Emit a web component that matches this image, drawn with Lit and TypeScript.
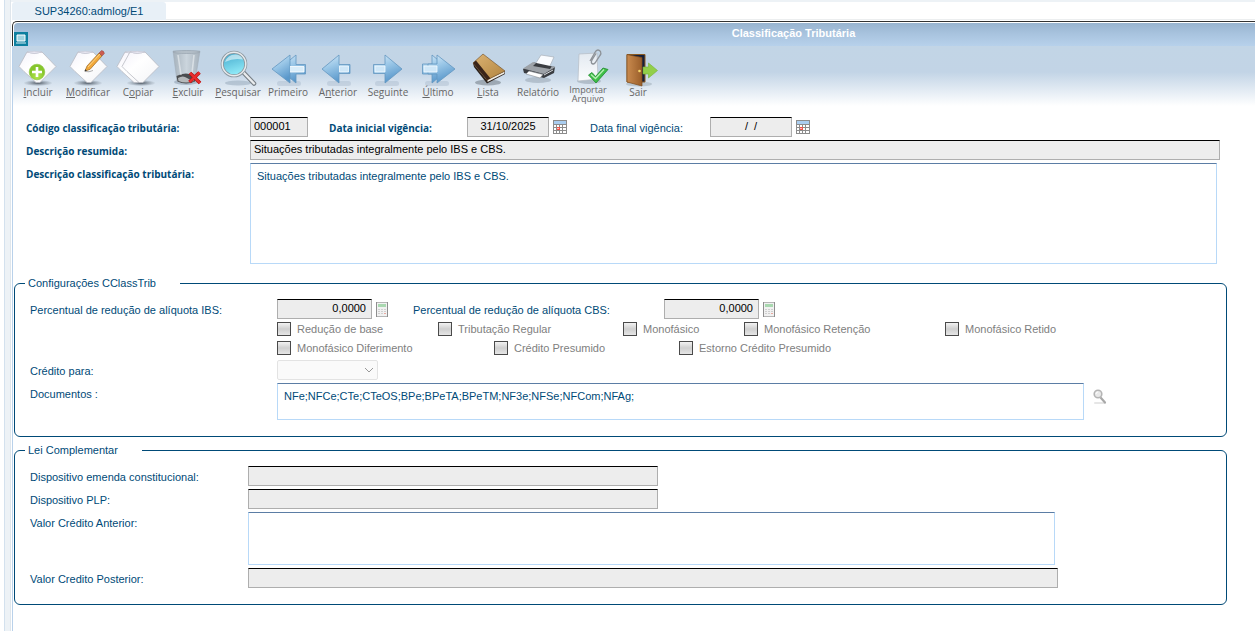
import { LitElement, html, css, svg } from "lit";
import { customElement, property } from "lit/decorators.js";

const shirt = (dx: number) => svg`
  <path d="M${11 + dx} 3 Q${18 + dx} 6 ${26 + dx} 3 L${40 + dx} 17.5 L${35 + dx} 22.5 L${24 + dx} 33.5 L${20 + dx} 33.5 L${8 + dx} 22.5 L${3 + dx} 17.5 Z"
    fill="url(#paper)" stroke="#b9bac2" stroke-width="0.8" stroke-linejoin="round"></path>
  <path d="M${11 + dx} 3 Q${18 + dx} 6 ${26 + dx} 3 Q${18 + dx} 1.5 ${11 + dx} 3Z" fill="#e6e5f0" stroke="#c3c3ce" stroke-width="0.5"></path>`;

const shadow = (cx: number, cy: number, rx: number) =>
  svg`<ellipse cx=${cx} cy=${cy} rx=${rx} ry="3" fill="url(#shade)"></ellipse>`;

const lightShadow = (cx: number) =>
  svg`<rect x=${cx - 12} y="32" width="24" height="5" rx="2.5" fill="#9fb0c2" opacity="0.35"></rect>`;

const icons: Record<string, unknown> = {
  incluir: svg`${shadow(22, 34, 14)}${shirt(0)}
    <circle cx="21" cy="23" r="7.8" fill="url(#green)" stroke="#8cc63a" stroke-width="0.6"></circle>
    <path d="M21 18v10M16 23h10" stroke="#fff" stroke-width="2.6"></path>`,
  modificar: svg`${shadow(22, 34, 14)}${shirt(1)}
    <path d="M19 22l5-1.6L36 7l-3-3L21 17z" fill="#f2a93b" stroke="#9a6a2a" stroke-width="0.7"></path>
    <path d="M22 18L34 5" stroke="#fbd58a" stroke-width="1"></path>
    <path d="M33 4l2.4-2.4q2.6 0 3 3L36 7z" fill="#cc5b50" stroke="#8d4a45" stroke-width="0.5"></path>
    <path d="M18.500 22.500l2.300-.8-1.500-1.500z" fill="#333"></path>
    <path d="M19 22.500q4 1 8-1" stroke="#999" stroke-width="0.8" fill="none"></path>`,
  copiar: svg`${shadow(25, 34, 14)}${shirt(-2)}${shirt(3)}`,
  excluir: svg`
    <ellipse cx="20" cy="33" rx="12" ry="3" fill="#8494a5" opacity="0.5"></ellipse>
    <path d="M7 2L11 32q9 4 18 0L34 2z" fill="url(#bin)" stroke="#a3afba" stroke-width="0.6"></path>
    <path d="M10.500 27q9-5 19.500 0l-1 5.500q-9 4-17.500 0z" fill="#4b4d50"></path>
    <path d="M12 29q5-3 9 0t7 1v2q-8 3-15.500 0z" fill="#b5b8ba"></path>
    <path d="M12 6l3 20M28 6l-2 18" stroke="#eef2f5" stroke-width="1.600" opacity="0.6"></path>
    <ellipse cx="20.500" cy="3" rx="13.500" ry="1.500" fill="#b4bfc8" stroke="#929ea9" stroke-width="0.6"></ellipse>
    <path d="M24 24l10 10M33.500 23.500L23.500 33" stroke="#b01414" stroke-width="3.600"></path>
    <path d="M24 24l10 10M33.500 23.500L23.500 33" stroke="#ea2c2c" stroke-width="2.400"></path>`,
  pesquisar: svg`
    <ellipse cx="22" cy="34" rx="13" ry="2.500" fill="#93a5b8" opacity="0.5"></ellipse>
    <path d="M27 23L38 34.500" stroke="#777f86" stroke-width="4.600" stroke-linecap="round"></path>
    <path d="M27 23L38 34.500" stroke="#e9ecee" stroke-width="2.400" stroke-linecap="round"></path>
    <circle cx="18" cy="15" r="11.800" fill="url(#lens)" stroke="#8b979f" stroke-width="3"></circle>
    <circle cx="18" cy="15" r="11.800" fill="none" stroke="#e6eaed" stroke-width="1.500"></circle>
    <path d="M9 13q3-8 11-7.500 5 .5 7 5-9-2-18 2.500z" fill="#fff" opacity="0.55"></path>`,
  primeiro: svg`${lightShadow(23)}
    <path d="M13 20L30 6v9.500h9.500v9.500H30v9z" fill="url(#arrow)" stroke="#6397c0" stroke-width="0.8"></path>
    <path d="M6 20L24 6v28z" fill="url(#arrow)" stroke="#6397c0" stroke-width="0.8"></path>
    <path d="M24 17.500h14v5.500H24" fill="#d9edfa" stroke="#fff" stroke-width="0.8"></path>`,
  anterior: svg`${lightShadow(23)}
    <path d="M6 20L23 6v9.500h11v9H23V34z" fill="url(#arrow)" stroke="#6397c0" stroke-width="0.8"></path>
    <path d="M23.500 17h9v6h-9z" fill="#cfe7f8" stroke="#f4fbff" stroke-width="0.8"></path>`,
  seguinte: svg`${lightShadow(21)}
    <path d="M36 20L19 6v9.500H7.500v9H19V34z" fill="url(#arrow)" stroke="#6397c0" stroke-width="0.8"></path>
    <path d="M9 17h10v6H9z" fill="#cfe7f8" stroke="#f4fbff" stroke-width="0.8"></path>`,
  ultimo: svg`${lightShadow(21)}
    <path d="M33 20L16 6v9H6.500v10H16v9z" fill="url(#arrow)" stroke="#6397c0" stroke-width="0.8"></path>
    <path d="M39 20L21 6v9h-9v10h9v9z" fill="url(#arrow)" stroke="#6397c0" stroke-width="0.8"></path>
    <path d="M8 17h13v6H8z" fill="#cfe7f8" stroke="#f4fbff" stroke-width="0.8"></path>`,
  lista: svg`
    <ellipse cx="22" cy="33.500" rx="13" ry="3" fill="#66707a" opacity="0.5"></ellipse>
    <path d="M7 14L8 18 21 34.500 39 25V22L20 30z" fill="#2b211c"></path>
    <path d="M21.500 30.500L38.500 22.500V24.500L21.500 33z" fill="#f2eee6"></path>
    <path d="M7 14L17 5 39 22 21 31z" fill="url(#book)" stroke="#6d4a22" stroke-width="0.6"></path>
    <path d="M7 14L10 11.500 24.500 29.500 21 31z" fill="#3a2419"></path>`,
  relatorio: svg`
    <ellipse cx="22" cy="31" rx="13" ry="3" fill="#8c99a6" opacity="0.45"></ellipse>
    <path d="M25 6L38 8 33 19 18 17z" fill="#fafcff" stroke="#a9b0b9" stroke-width="0.7"></path>
    <path d="M7 20L18 13.500 39 18 38 24 28 29 8 24z" fill="#3a3d42"></path>
    <path d="M7 19.500L17 13 20 14 17 17 34 20 36 17 39.500 18 28 25z" fill="#9da2a8"></path>
    <path d="M13 22L27 25.500 24 29 10 25z" fill="#fff" stroke="#85898f" stroke-width="0.6"></path>
    <path d="M28 26l9-5" stroke="#d6d9dc" stroke-width="1"></path>`,
  importar: svg`
    <ellipse cx="23" cy="32" rx="12" ry="3" fill="#8d9aa6" opacity="0.5"></ellipse>
    <path d="M13 5L31 4 32 30 12 32z" fill="url(#sheet)" stroke="#b4bcc4" stroke-width="0.7"></path>
    <path d="M24 12L29.500 2.500q2.500-3 5 0 1 2-.5 4L29 14q-2 2-3.500 0-.5-1 .5-3l4-6.500" fill="none" stroke="#8d9298" stroke-width="1.300"></path>
    <path d="M22.500 26L26 23.500 29.500 27.500 37 19l5 1.500L30 34z" fill="#3fbf48" stroke="#1f8a2e" stroke-width="0.8"></path>
    <path d="M25 25.500L29.500 29.500 38 20.500" stroke="#b6f0b4" stroke-width="1.300" fill="none"></path>`,
  sair: svg`
    <ellipse cx="23" cy="35" rx="13" ry="2.500" fill="#8d9aa6" opacity="0.4"></ellipse>
    <path d="M11 5.500H29V33H11z" fill="#15203c" stroke="#8a5a22" stroke-width="1"></path>
    <path d="M27 18h5.500v-4L41.500 21.500 32.500 29v-4H27z" fill="#92cf4a" stroke="#76b335" stroke-width="0.6"></path>
    <path d="M11 5.500L26 8.500V37L11 33z" fill="url(#door)" stroke="#7b4a1c" stroke-width="0.7"></path>
    <circle cx="23.500" cy="22" r="1.300" fill="#f6d66a"></circle>`,
};

const defs = svg`<defs>
  <linearGradient id="paper" x1="0" y1="0" x2="1" y2="1"><stop offset="0" stop-color="#f4f2fb"></stop><stop offset="0.4" stop-color="#fff"></stop><stop offset="1" stop-color="#f3f4f7"></stop></linearGradient>
  <radialGradient id="shade"><stop offset="0" stop-color="#3c4651" stop-opacity="0.9"></stop><stop offset="1" stop-color="#7b8794" stop-opacity="0.1"></stop></radialGradient>
  <radialGradient id="green" cx="0.5" cy="0.8"><stop offset="0" stop-color="#b5e64e"></stop><stop offset="1" stop-color="#86c62c"></stop></radialGradient>
  <linearGradient id="bin"><stop offset="0" stop-color="#a6b2bc"></stop><stop offset="0.5" stop-color="#cbd5dd"></stop><stop offset="1" stop-color="#a6b2bc"></stop></linearGradient>
  <linearGradient id="lens" x1="0" y1="0" x2="0.3" y2="1"><stop offset="0" stop-color="#3fa5ca"></stop><stop offset="1" stop-color="#8fe9f7"></stop></linearGradient>
  <linearGradient id="arrow" x1="0" y1="0" x2="0.4" y2="1"><stop offset="0" stop-color="#dcedfa"></stop><stop offset="0.45" stop-color="#9cc8e8"></stop><stop offset="1" stop-color="#5a98cb"></stop></linearGradient>
  <linearGradient id="book" x1="0" y1="0" x2="1" y2="1"><stop offset="0" stop-color="#dcb373"></stop><stop offset="1" stop-color="#b1843f"></stop></linearGradient>
  <linearGradient id="sheet" x1="0" y1="0" x2="0" y2="1"><stop offset="0" stop-color="#e3eaf1"></stop><stop offset="1" stop-color="#fbfcfd"></stop></linearGradient>
  <linearGradient id="door"><stop offset="0" stop-color="#c98a4e"></stop><stop offset="1" stop-color="#9a5e2a"></stop></linearGradient>
</defs>`;

@customElement("tool-button")
class ToolButton extends LitElement {
  @property() icon = "";
  @property() before = "";
  @property() key = "";
  @property() after = "";
  @property() second = "";

  static styles = css`
    :host { display: block; width: 50px; }
    button {
      display: flex; flex-direction: column; align-items: center;
      width: 100%; padding: 0; border: 0; background: none;
      font: 10px/12px "Open Sans", "Noto Sans", sans-serif;
      color: #666; white-space: nowrap; cursor: pointer;
    }
    svg { display: block; width: 44px; height: 38px; margin-bottom: -1px; }
    .two { font-size: 9px; line-height: 9px; margin-top: -1px; }
    .key { text-decoration: underline; }
  `;

  render() {
    return html`<button type="button">
      <svg viewBox="0 0 44 38" aria-hidden="true">${defs}${icons[this.icon] as any}</svg>
      <span class=${this.second ? "two" : ""}>${this.before}<span class="key">${this.key}</span>${this.after}${this.second ? html`<br />${this.second}` : ""}</span>
    </button>`;
  }
}

const tools: [string, string, string, string, string][] = [
  ["incluir", "", "I", "ncluir", ""],
  ["modificar", "", "M", "odificar", ""],
  ["copiar", "C", "o", "piar", ""],
  ["excluir", "", "E", "xcluir", ""],
  ["pesquisar", "", "P", "esquisar", ""],
  ["primeiro", "Primeiro", "", "", ""],
  ["anterior", "A", "n", "terior", ""],
  ["seguinte", "Se", "g", "uinte", ""],
  ["ultimo", "", "Ú", "ltimo", ""],
  ["lista", "", "L", "ista", ""],
  ["relatorio", "Relatório", "", "", ""],
  ["importar", "Importar", "", "", "Arquivo"],
  ["sair", "Sair", "", "", ""],
];

const calendarIcon = html`<svg viewBox="0 0 14 14" width="14" height="14" aria-hidden="true">
  <rect width="14" height="14" fill="#8c8c8c"></rect>
  <rect x="1" y="1" width="12" height="3" fill="#a9cdf0"></rect>
  <path d="M1 5h2v2H1zM4 5h2v2H4zM7 5h2v2H7zM10 5h3v2h-3zM1 8h2v2H1zM7 8h2v2H7zM10 8h3v2h-3zM1 11h2v2H1zM4 11h2v2H4zM7 11h2v2H7zM10 11h3v2h-3z" fill="#fff"></path>
  <path d="M4 7h3v3H4z" fill="#f0564c"></path>
  <path d="M4 8h2v1H4z" fill="#fbb"></path>
</svg>`;

const calculatorIcon = html`<svg viewBox="0 0 12 15" width="12" height="15" aria-hidden="true">
  <rect x="0.500" y="0.500" width="11" height="14" fill="#f1f1f1" stroke="#b5b5b5"></rect>
  <path d="M0.500 0v15M11.500 0v15" stroke="#8e8e8e"></path>
  <rect x="2" y="2" width="8" height="3" fill="#a9d8b0"></rect>
  <path d="M2 7h2v1H2zM5 7h2v1H5zM8 7h2v1H8zM2 9h2v1H2zM5 9h2v1H5zM8 9h2v1H8zM2 11h2v1H2zM5 11h2v1H5z" fill="#cfcfcf"></path>
  <path d="M8 11h2v1H8z" fill="#e9a9a0"></path>
</svg>`;

const lookupIcon = html`<svg viewBox="0 0 14 16" width="14" height="16" aria-hidden="true">
  <rect x="1" y="13" width="12" height="2" rx="1" fill="#e6e6e6"></rect>
  <path d="M8 9l4 4.500" stroke="#a8a8a8" stroke-width="2.200" stroke-linecap="round"></path>
  <circle cx="5" cy="5" r="3.800" fill="#e9e9e9" stroke="#b5b5b5" stroke-width="1.600"></circle>
  <path d="M3 5q0-2 2-2" stroke="#fff" fill="none"></path>
</svg>`;

const check = (id: string, text: string) =>
  html`<label class="check" for=${id}><input id=${id} type="checkbox" disabled />${text}</label>`;

@customElement("app-root")
class AppRoot extends LitElement {
  static styles = css`
    :host {
      display: flex; min-height: 100vh; background: #fff; color: #004a77;
      font: 11px/14px "Liberation Sans", Arial, sans-serif;
    }
    * { box-sizing: border-box; }
    .rail { width: 7px; margin-left: 4px; flex: none; background: #edf2f6; border-left: 1px solid #d3e1ee; border-right: 1px solid #dfe6ec; }
    .page { flex: 1; min-width: 0; border-top: 2px solid #edf2f6; padding-left: 1px; }
    .tabs { display: flex; height: 18px; border-bottom: 1px solid #eceeef; }
    .tab { width: 154px; height: 18px; background: #e8f0f7; color: #004a77; text-align: center; line-height: 19px; text-decoration: none; border-radius: 3px 3px 0 0; }
    .window { margin-top: 1px; }
    .head { border: 1px solid #333; border-width: 1px 0 0 1px; border-radius: 5px 0 0 0; height: 25px; padding: 1px 0 0 1px; }
    .title {
      display: flex; align-items: flex-end; height: 23px;
      background: linear-gradient(#98b4d0, #a9c4df 50%, #b7d1eb); border-radius: 4px 0 0 0;
    }
    .title svg { flex: none; }
    h1 { flex: 1; align-self: flex-start; margin: 0; padding-left: 304px; font-size: 11px; line-height: 21px; font-weight: bold; color: #fff; text-align: center; }
    .body { border-left: 1px solid #b9d1ea; min-height: calc(100vh - 46px); }
    .tools { display: flex; height: 62px; padding-top: 3px; background: linear-gradient(#c2d5e6, #c2d4e6 26px, #fff 60px); }
    .main { display: flex; flex-direction: column; gap: 3px; padding: 9px 35px 0 13px; }
    .row { display: flex; }
    .lbl { flex: none; width: 224px; height: 20px; line-height: 20px; padding-top: 1px; }
    .bold { font: bold 10px/20px "Open Sans", "Noto Sans", sans-serif; }
    .in {
      height: 20px; flex: none; margin: 0; padding: 0 3px 2px; font: inherit; color: #000;
      background: #ededed; border: 1px solid #aeaeae; border-top-color: #000; border-radius: 0; outline: 0;
    }
    textarea {
      flex: 1; min-width: 0; margin: 0; padding: 5px 6px; font: inherit; color: #004a77; resize: none;
      background: #fff; border: 1px solid #b8d9f8; border-top-color: #5b7da5; border-radius: 0; outline: 0;
    }
    .fill { flex: 1; min-width: 0; }
    .code { width: 58px; }
    .date { width: 82px; text-align: center; }
    .num { width: 95px; text-align: right; padding-right: 5px; }
    .half { width: 410px; }
    .start { width: 138px; }
    .end { width: 120px; }
    .inset { margin-right: 3px; }
    .gap-l { margin-left: 21px; }
    .gap-l2 { margin-left: 23px; }
    .ico { flex: none; display: flex; align-items: flex-start; width: 14px; height: 20px; padding: 3px 0 0; margin: 0 0 0 4px; border: 0; background: none; }
    .tall { height: 101px; }
    .mid { height: 53px; }
    .low { height: 37px; }
    .groups { display: flex; flex-direction: column; gap: 6px; padding: 12px 28px 24px 1px; }
    fieldset {
      min-width: 0; margin: 0; padding: 9px 142px 16px 15px; display: flex; flex-direction: column; gap: 3px;
      border: 1px solid #004a77; border-radius: 6px;
    }
    legend { margin-left: -5px; padding: 0 24px 0 3px; line-height: 14px; }
    .config .lbl { width: 247px; }
    .config .cbs { width: 251px; }
    .law { padding-right: 168px; }
    .law .lbl { width: 218px; }
    .checks { display: grid; margin-left: 247px; row-gap: 5px; }
    .first { grid-template-columns: 161px 185px 121px 201px auto; }
    .second { grid-template-columns: 217px 185px auto; padding: 2px 0; }
    .check { display: flex; align-items: center; gap: 6px; color: #808080; white-space: nowrap; }
    .check input {
      appearance: none; margin: 0; width: 14px; height: 14px; border: 1px solid #4a4a4a;
      background: linear-gradient(#f2f2f2, #cfcfcf 50%, #e6e6e6);
    }
    .select { display: grid; align-items: center; width: 101px; height: 20px; }
    .select > * { grid-area: 1 / 1; }
    select { appearance: none; width: 100%; height: 20px; border: 1px solid #d8d8d8; border-radius: 2px; background: #f8f8f8; font: inherit; }
    .select svg { justify-self: end; margin-right: 4px; z-index: 1; }
    .docs { margin-right: -23px; }
    .docs .ico { margin-left: 9px; padding-top: 6px; height: 24px; }
  `;

  render() {
    return html`
      <div class="rail"></div>
      <div class="page">
        <nav class="tabs"><a class="tab" href="#">SUP34260:admlog/E1</a></nav>
        <div class="window">
          <div class="head"><header class="title">
            <svg viewBox="0 0 14 14" width="14" height="14" aria-hidden="true">
              <rect width="14" height="14" fill="#0d7f9f"></rect>
              <path d="M3 3h8v6H3z" fill="#9fd3e0" stroke="#fff"></path>
              <path d="M2 11h10" stroke="#d5edf3"></path>
            </svg>
            <h1>Classificação Tributária</h1>
          </header></div>
          <div class="body">
            <div class="tools" role="toolbar">
              ${tools.map((t) => html`<tool-button .icon=${t[0]} .before=${t[1]} .key=${t[2]} .after=${t[3]} .second=${t[4]}></tool-button>`)}
            </div>
            <form>
              <div class="main">
                <div class="row">
                  <label class="lbl bold" for="codigo">Código classificação tributária:</label>
                  <input id="codigo" class="in code" value="000001" readonly />
                  <label class="lbl bold start gap-l" for="inicial">Data inicial vigência:</label>
                  <input id="inicial" class="in date" value="31/10/2025" readonly />
                  <button type="button" class="ico" aria-label="Calendário">${calendarIcon}</button>
                  <label class="lbl end gap-l2" for="final">Data final vigência:</label>
                  <input id="final" class="in date" value="/  /" readonly />
                  <button type="button" class="ico" aria-label="Calendário">${calendarIcon}</button>
                </div>
                <div class="row">
                  <label class="lbl bold" for="resumida">Descrição resumida:</label>
                  <input id="resumida" class="in fill" value="Situações tributadas integralmente pelo IBS e CBS." readonly />
                </div>
                <div class="row inset">
                  <label class="lbl bold" for="descricao">Descrição classificação tributária:</label>
                  <textarea id="descricao" class="tall" readonly .value=${"Situações tributadas integralmente pelo IBS e CBS."}></textarea>
                </div>
              </div>
              <div class="groups">
                <fieldset class="config">
                  <legend>Configurações CClassTrib</legend>
                  <div class="row">
                    <label class="lbl" for="ibs">Percentual de redução de alíquota IBS:</label>
                    <input id="ibs" class="in num" value="0,0000" readonly />
                    <button type="button" class="ico" aria-label="Calculadora">${calculatorIcon}</button>
                    <label class="lbl cbs gap-l2" for="cbs">Percentual de redução de alíquota CBS:</label>
                    <input id="cbs" class="in num" value="0,0000" readonly />
                    <button type="button" class="ico" aria-label="Calculadora">${calculatorIcon}</button>
                  </div>
                  <div class="checks first">
                    ${check("base", "Redução de base")}${check("regular", "Tributação Regular")}${check("mono", "Monofásico")}${check("retencao", "Monofásico Retenção")}${check("retido", "Monofásico Retido")}
                  </div>
                  <div class="checks second">
                    ${check("diferimento", "Monofásico Diferimento")}${check("presumido", "Crédito Presumido")}${check("estorno", "Estorno Crédito Presumido")}
                  </div>
                  <div class="row">
                    <label class="lbl" for="credito">Crédito para:</label>
                    <div class="select">
                      <select id="credito" disabled><option></option></select>
                      <svg viewBox="0 0 10 6" width="10" height="6" aria-hidden="true"><path d="M1 1l4 4 4-4" fill="none" stroke="#999"></path></svg>
                    </div>
                  </div>
                  <div class="row docs">
                    <label class="lbl" for="docs">Documentos :</label>
                    <textarea id="docs" class="low" readonly .value=${"NFe;NFCe;CTe;CTeOS;BPe;BPeTA;BPeTM;NF3e;NFSe;NFCom;NFAg;"}></textarea>
                    <button type="button" class="ico" aria-label="Pesquisar documentos">${lookupIcon}</button>
                  </div>
                </fieldset>
                <fieldset class="law">
                  <legend>Lei Complementar</legend>
                  <div class="row">
                    <label class="lbl" for="emenda">Dispositivo emenda constitucional:</label>
                    <input id="emenda" class="in half" readonly />
                  </div>
                  <div class="row">
                    <label class="lbl" for="plp">Dispositivo PLP:</label>
                    <input id="plp" class="in half" readonly />
                  </div>
                  <div class="row inset">
                    <label class="lbl" for="anterior">Valor Crédito Anterior:</label>
                    <textarea id="anterior" class="mid" readonly></textarea>
                  </div>
                  <div class="row">
                    <label class="lbl" for="posterior">Valor Credito Posterior:</label>
                    <input id="posterior" class="in fill" readonly />
                  </div>
                </fieldset>
              </div>
            </form>
          </div>
        </div>
      </div>
    `;
  }
}
